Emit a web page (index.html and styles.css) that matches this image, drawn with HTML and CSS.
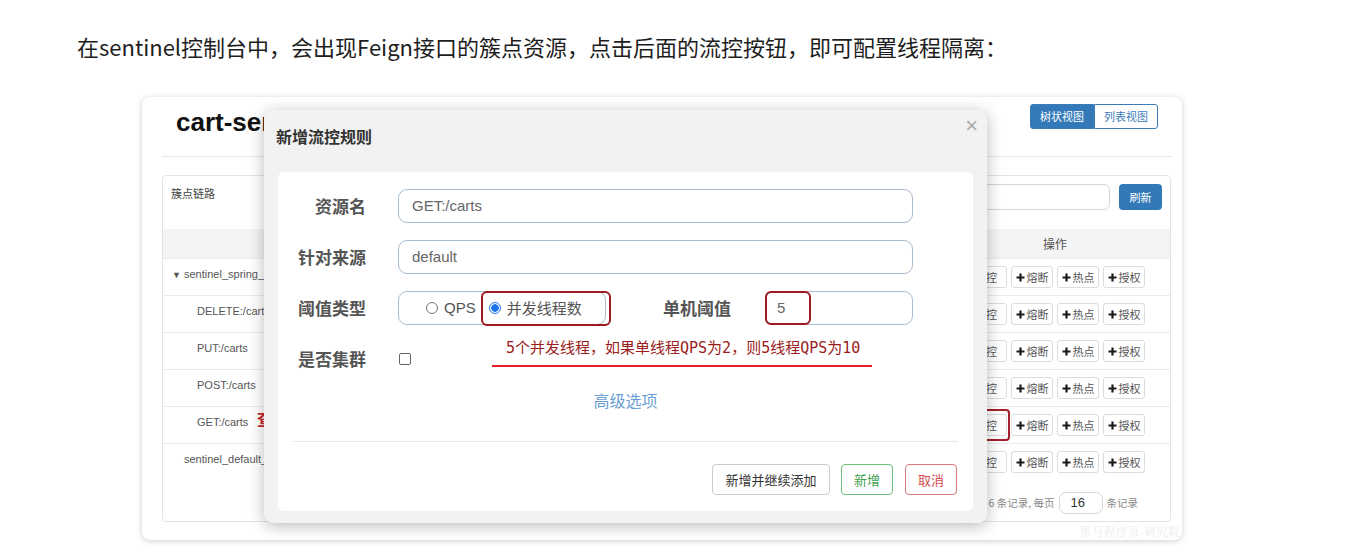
FILE: index.html
```html
<!DOCTYPE html>
<html lang="zh-CN">
<head>
<meta charset="utf-8">
<title>sentinel 流控</title>
<link rel="stylesheet" href="styles.css">
</head>
<body>
<p class="intro">在sentinel控制台中，会出现Feign接口的簇点资源，点击后面的流控按钮，即可配置线程隔离：</p>

<div class="card">
  <div class="card-head">
    <h1 class="app-title">cart-service</h1>
    <div class="view-toggle"><span class="vt active">树状视图</span><span class="vt">列表视图</span></div>
  </div>
  <div class="panel">
    <div class="panel-top">
      <span class="panel-title">簇点链路</span>
      <div class="search-area"><span class="search-input"></span><span class="btn-refresh">刷新</span></div>
    </div>
    <div class="thead"><span class="c-res">资源名</span><span class="c-ops">操作</span></div>
    <div class="row"><span class="c-res lvl0"><span class="tri">▼</span> sentinel_spring_web_context</span>
      <span class="c-ops"><span class="op">流控</span><span class="op"><svg class="plus" viewBox="0 0 9 9"><path d="M4.5 0.5v8M0.5 4.5h8"/></svg>熔断</span><span class="op"><svg class="plus" viewBox="0 0 9 9"><path d="M4.5 0.5v8M0.5 4.5h8"/></svg>热点</span><span class="op"><svg class="plus" viewBox="0 0 9 9"><path d="M4.5 0.5v8M0.5 4.5h8"/></svg>授权</span></span></div>
    <div class="row"><span class="c-res lvl1">DELETE:/carts</span>
      <span class="c-ops"><span class="op">流控</span><span class="op"><svg class="plus" viewBox="0 0 9 9"><path d="M4.5 0.5v8M0.5 4.5h8"/></svg>熔断</span><span class="op"><svg class="plus" viewBox="0 0 9 9"><path d="M4.5 0.5v8M0.5 4.5h8"/></svg>热点</span><span class="op"><svg class="plus" viewBox="0 0 9 9"><path d="M4.5 0.5v8M0.5 4.5h8"/></svg>授权</span></span></div>
    <div class="row"><span class="c-res lvl1">PUT:/carts</span>
      <span class="c-ops"><span class="op">流控</span><span class="op"><svg class="plus" viewBox="0 0 9 9"><path d="M4.5 0.5v8M0.5 4.5h8"/></svg>熔断</span><span class="op"><svg class="plus" viewBox="0 0 9 9"><path d="M4.5 0.5v8M0.5 4.5h8"/></svg>热点</span><span class="op"><svg class="plus" viewBox="0 0 9 9"><path d="M4.5 0.5v8M0.5 4.5h8"/></svg>授权</span></span></div>
    <div class="row"><span class="c-res lvl1">POST:/carts</span>
      <span class="c-ops"><span class="op">流控</span><span class="op"><svg class="plus" viewBox="0 0 9 9"><path d="M4.5 0.5v8M0.5 4.5h8"/></svg>熔断</span><span class="op"><svg class="plus" viewBox="0 0 9 9"><path d="M4.5 0.5v8M0.5 4.5h8"/></svg>热点</span><span class="op"><svg class="plus" viewBox="0 0 9 9"><path d="M4.5 0.5v8M0.5 4.5h8"/></svg>授权</span></span></div>
    <div class="row"><span class="c-res lvl1">GET:/carts</span>
      <span class="c-ops"><span class="op">流控</span><span class="op"><svg class="plus" viewBox="0 0 9 9"><path d="M4.5 0.5v8M0.5 4.5h8"/></svg>熔断</span><span class="op"><svg class="plus" viewBox="0 0 9 9"><path d="M4.5 0.5v8M0.5 4.5h8"/></svg>热点</span><span class="op"><svg class="plus" viewBox="0 0 9 9"><path d="M4.5 0.5v8M0.5 4.5h8"/></svg>授权</span></span></div>
    <div class="row"><span class="c-res lvl0b">sentinel_default_context</span>
      <span class="c-ops"><span class="op">流控</span><span class="op"><svg class="plus" viewBox="0 0 9 9"><path d="M4.5 0.5v8M0.5 4.5h8"/></svg>熔断</span><span class="op"><svg class="plus" viewBox="0 0 9 9"><path d="M4.5 0.5v8M0.5 4.5h8"/></svg>热点</span><span class="op"><svg class="plus" viewBox="0 0 9 9"><path d="M4.5 0.5v8M0.5 4.5h8"/></svg>授权</span></span></div>
    <div class="pager">共 6 条记录, 每页 <span class="page-size">16</span> 条记录</div>
  </div>
</div>

<span class="mark-char">查</span>
<span class="mark-flow"></span>
<span class="watermark">黑马程序员-研究院</span>

<div class="modal">
  <div class="modal-head">
    <span class="modal-title">新增流控规则</span>
    <span class="modal-close">×</span>
  </div>
  <div class="modal-body">
    <div class="form-row">
      <span class="f-label">资源名</span>
      <div class="f-input">GET:/carts</div>
    </div>
    <div class="form-row">
      <span class="f-label">针对来源</span>
      <div class="f-input">default</div>
    </div>
    <div class="form-row">
      <span class="f-label">阈值类型</span>
      <div class="radio-box">
        <span class="radio"></span><span class="r-text">QPS</span>
        <span class="radio checked"></span><span class="r-text cjk">并发线程数</span>
      </div>
      <span class="f-label wide">单机阈值</span>
      <div class="f-input small">5</div>
    </div>
    <div class="form-row last">
      <span class="f-label">是否集群</span>
      <span class="checkbox"></span>
    </div>
    <div class="adv">高级选项</div>
    <div class="modal-divider"></div>
    <div class="modal-footer">
      <span class="btn btn-default">新增并继续添加</span>
      <span class="btn btn-ok">新增</span>
      <span class="btn btn-cancel">取消</span>
    </div>

    <span class="hl hl-radio"></span>
    <span class="hl hl-val"></span>
    <span class="note">5个并发线程，如果单线程QPS为2，则5线程QPS为10</span>
    <span class="note-line"></span>
  </div>
</div>
</body>
</html>
```

FILE: styles.css
```css
body {
  margin: 0;
  background: #fff;
  position: relative;
  width: 1354px;
  height: 558px;
  overflow: hidden;
  font-family: "Liberation Sans", "Noto Sans CJK SC", sans-serif;
}

.intro {
  margin: 0;
  padding: 31px 0 0 77px;
  font: 22px/30px "Noto Sans CJK SC", sans-serif;
  color: #1e1e1e;
}

/* background dashboard card */
.card {
  margin: 36px 0 0 142px;
  width: 1040px;
  height: 443px;
  box-sizing: border-box;
  padding: 0 10px 0 20px;
  background: #fff;
  border-radius: 8px;
  box-shadow: 0 1px 6px rgba(0, 0, 0, 0.2);
}

.card-head {
  height: 60px;
  box-sizing: border-box;
  border-bottom: 1px solid #e6e6e6;
  display: flex;
  justify-content: space-between;
  align-items: flex-start;
}

.app-title {
  margin: 10px 0 0 14px;
  width: 88px;
  overflow: hidden;
  white-space: nowrap;
  font: bold 26px/30px "Liberation Sans", sans-serif;
  color: #111;
}

.view-toggle {
  margin: 7px 14px 0 0;
  display: flex;
}

.vt {
  width: 64px;
  height: 25px;
  box-sizing: border-box;
  border: 1px solid #3b7cb8;
  font: 11px/23px "Noto Sans CJK SC", sans-serif;
  text-align: center;
  color: #3b7cb8;
  border-radius: 0 3px 3px 0;
}

.vt.active {
  background: #3479b7;
  color: #fff;
  border-radius: 3px 0 0 3px;
}

.panel {
  margin-top: 18px;
  width: 1009px;
  height: 347px;
  box-sizing: border-box;
  border: 1px solid #e3e3e3;
  border-radius: 4px;
  display: flex;
  flex-direction: column;
}

.panel-top {
  height: 53px;
  flex-shrink: 0;
  display: flex;
  justify-content: space-between;
  align-items: flex-start;
  padding: 0 8px;
}

.panel-title {
  margin-top: 9px;
  font: 11px/16px "Noto Sans CJK SC", sans-serif;
  color: #444;
}

.search-area {
  display: flex;
  gap: 9px;
  margin-top: 8px;
}

.search-input {
  width: 200px;
  height: 26px;
  box-sizing: border-box;
  border: 1px solid #d6d6d6;
  border-radius: 6px;
}

.btn-refresh {
  width: 43px;
  height: 26px;
  background: #3479b7;
  color: #fff;
  font: 11px/26px "Noto Sans CJK SC", sans-serif;
  text-align: center;
  border-radius: 4px;
}

.thead {
  height: 29px;
  flex-shrink: 0;
  background: #f4f4f4;
  display: flex;
  align-items: center;
  font: 12px "Noto Sans CJK SC", sans-serif;
  color: #555;
}

.thead .c-res {
  text-align: center;
}

.row {
  height: 37px;
  flex-shrink: 0;
  box-sizing: border-box;
  border-top: 1px solid #ececec;
  display: flex;
  align-items: center;
  font-size: 11px;
  color: #555;
}

.c-res {
  flex: 1;
  white-space: nowrap;
}

.row .c-res {
  margin-bottom: 6px;
}

.lvl0 { padding-left: 9px; }
.lvl0b { padding-left: 21px; }
.lvl1 { padding-left: 34px; }

.tri {
  font-size: 9px;
  color: #555;
}

.c-ops {
  width: 230px;
  flex-shrink: 0;
  display: flex;
  justify-content: center;
  gap: 4px;
}

.thead .c-ops {
  display: block;
  text-align: center;
}

.op {
  width: 42px;
  height: 22px;
  box-sizing: border-box;
  border: 1px solid #dcdcdc;
  border-radius: 3px;
  font: 11px "Noto Sans CJK SC", sans-serif;
  color: #555;
  display: flex;
  align-items: center;
  justify-content: center;
  gap: 2px;
}

.plus {
  width: 9px;
  height: 9px;
}

.plus path {
  stroke: #1a1a1a;
  stroke-width: 2.2;
}

.pager {
  flex: 1;
  display: flex;
  justify-content: flex-end;
  align-items: center;
  padding: 4px 32px 0 0;
  font: 10.5px "Noto Sans CJK SC", sans-serif;
  color: #888;
}

.page-size {
  width: 44px;
  height: 22px;
  box-sizing: border-box;
  border: 1px solid #d6d6d6;
  border-radius: 7px;
  margin: 0 4px;
  padding-left: 11px;
  font: 13px/20px "Liberation Sans", sans-serif;
  color: #333;
}

/* annotations behind modal */
.mark-char {
  position: absolute;
  left: 257px;
  top: 409px;
  font: bold 17px/20px "Noto Sans CJK SC", serif;
  color: #c8282d;
}

.mark-flow {
  position: absolute;
  left: 958px;
  top: 409px;
  width: 52px;
  height: 32px;
  box-sizing: border-box;
  border: 2px solid #a3212a;
  border-radius: 4px;
}

.watermark {
  position: absolute;
  left: 1080px;
  top: 524px;
  font: 11px/14px "Noto Serif CJK SC", "Noto Sans CJK SC", serif;
  letter-spacing: 1px;
  color: #ebebeb;
}

/* modal */
.modal {
  position: absolute;
  left: 264px;
  top: 110px;
  width: 723px;
  height: 413px;
  background: #f2f2f2;
  border-radius: 9px;
  box-shadow: 0 3px 16px rgba(0, 0, 0, 0.28);
  display: flex;
  flex-direction: column;
}

.modal-head {
  height: 62px;
  flex-shrink: 0;
  display: flex;
  justify-content: space-between;
  align-items: flex-start;
  padding: 0 9px 0 12px;
}

.modal-title {
  margin-top: 16px;
  font: bold 16px/20px "Noto Sans CJK SC", sans-serif;
  color: #333;
}

.modal-close {
  margin-top: 3px;
  font: 22px/26px "Liberation Sans", sans-serif;
  color: #aaa;
}

.modal-body {
  margin: 0 14px;
  height: 339px;
  background: #fff;
  border-radius: 6px;
  position: relative;
  padding: 17px 15px 0;
  box-sizing: border-box;
}

.form-row {
  display: flex;
  align-items: center;
  height: 34px;
  margin-bottom: 17px;
}

.form-row.last {
  margin-bottom: 0;
}

.f-label {
  width: 73px;
  flex-shrink: 0;
  text-align: right;
  font: bold 17px/24px "Noto Sans CJK SC", sans-serif;
  color: #555;
}

.f-label.wide {
  width: 125px;
}

.f-input {
  margin-left: 32px;
  width: 515px;
  height: 34px;
  box-sizing: border-box;
  border: 1.5px solid #a9bcd0;
  border-radius: 9px;
  padding-left: 13px;
  font: 15px/31px "Liberation Sans", sans-serif;
  color: #666;
}

.f-input.small {
  margin-left: 34px;
  width: 148px;
  padding-left: 11px;
}

.radio-box {
  margin-left: 32px;
  width: 208px;
  height: 34px;
  box-sizing: border-box;
  border: 1.5px solid #a9bcd0;
  border-radius: 9px;
  display: flex;
  align-items: center;
  padding-left: 27px;
}

.radio {
  width: 12px;
  height: 12px;
  box-sizing: border-box;
  border: 1px solid #777;
  border-radius: 50%;
  background: #fff;
  flex-shrink: 0;
}

.radio.checked {
  margin-left: 13px;
  border-color: #1a73e8;
  background: radial-gradient(circle, #1a73e8 0 3.5px, #fff 4px);
}

.r-text {
  margin-left: 6px;
  font: 15px/20px "Liberation Sans", sans-serif;
  color: #555;
}

.r-text.cjk {
  font-family: "Noto Sans CJK SC", sans-serif;
}

.checkbox {
  margin-left: 33px;
  width: 12px;
  height: 12px;
  box-sizing: border-box;
  border: 1px solid #666;
  border-radius: 2px;
}

.adv {
  margin-top: 12px;
  text-align: center;
  font: 16px/24px "Noto Sans CJK SC", sans-serif;
  color: #6b9fd3;
}

.modal-divider {
  margin-top: 29px;
  border-top: 1px solid #e8e8e8;
}

.modal-footer {
  margin-top: 22px;
  display: flex;
  justify-content: flex-end;
  gap: 11px;
  padding-right: 1px;
}

.btn {
  height: 31px;
  box-sizing: border-box;
  border-radius: 4px;
  border: 1px solid #ccc;
  font: 13px/29px "Noto Sans CJK SC", sans-serif;
  text-align: center;
  color: #333;
  background: #fff;
}

.btn-default { width: 118px; }

.btn-ok {
  width: 52px;
  border-color: #6cbf7a;
  color: #3f9e50;
}

.btn-cancel {
  width: 52px;
  margin-left: 1px;
  border-color: #d9787a;
  color: #d24c50;
}

/* annotations over modal */
.hl {
  position: absolute;
  box-sizing: border-box;
  border: 2px solid #9e1a1f;
  border-radius: 6px;
}

.hl-radio {
  left: 203px;
  top: 119px;
  width: 130px;
  height: 35px;
}

.hl-val {
  left: 487px;
  top: 119px;
  width: 46px;
  height: 34px;
}

.note {
  position: absolute;
  left: 228px;
  top: 166px;
  font: 15px/20px "DejaVu Sans Mono", "Noto Sans CJK SC", monospace;
  color: #9b1c1c;
  white-space: nowrap;
}

.note-line {
  position: absolute;
  left: 214px;
  top: 193px;
  width: 380px;
  height: 2px;
  background: #e5202a;
}
```
